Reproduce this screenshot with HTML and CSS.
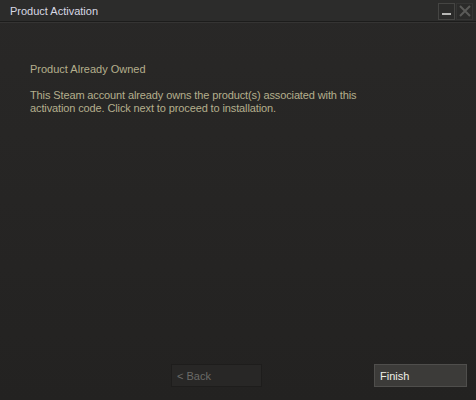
FILE: index.html
```html
<!DOCTYPE html>
<html>
<head>
<meta charset="utf-8">
<link rel="stylesheet" href="styles.css">
</head>
<body>
<div class="window">
  <div class="titlebar">
    <span class="title">Product Activation</span>
    <div class="controls">
      <div class="ctl min"><span class="dash"></span></div>
      <div class="ctl close">
        <svg width="14" height="14" viewBox="0 0 14 14"><path d="M2 2 L12 12 M12 2 L2 12" stroke="#5a5a58" stroke-width="2"/></svg>
      </div>
    </div>
  </div>
  <div class="content">
    <div class="heading">Product Already Owned</div>
    <p class="msg">This Steam account already owns the product(s) associated with this activation code. Click next to proceed to installation.</p>
  </div>
  <div class="footer">
    <button class="btn back">&lt; Back</button>
    <button class="btn finish">Finish</button>
  </div>
</div>
</body>
</html>
```
FILE: styles.css
```css
html, body { margin: 0; padding: 0; }
body { width: 476px; height: 400px; background: #262524; font-family: "Liberation Sans", Arial, sans-serif; font-size: 11px; }
.window { width: 476px; height: 400px; display: flex; flex-direction: column; background: linear-gradient(#292827, #232221); box-sizing: border-box; }
.titlebar { height: 21px; display: flex; align-items: center; justify-content: space-between; background: #2c2c2b; border-bottom: 1px solid #1c1c1b; box-shadow: 0 1px 0 #353433; }
.title { color: #d8d8e4; padding-left: 10px; font-size: 11px; }
.controls { display: flex; gap: 1px; padding-right: 3px; padding-top: 1px; }
.ctl { width: 15px; height: 15px; border: 1px solid #454543; display: flex; align-items: center; justify-content: center; background: #2b2b2a; }
.ctl.close { border-color: #353534; }
.dash { width: 9px; height: 2px; background: #b8b8b6; margin-top: 5px; }
.content { flex: 1; padding: 41px 30px 0 30px; color: #b5af8d; }
.heading { line-height: 13px; }
.msg { margin: 13px 0 0; line-height: 13px; width: 340px; letter-spacing: -0.12px; }
.footer { height: 36px; display: flex; align-items: flex-start; padding-left: 171px; }
.btn { font-family: inherit; font-size: 11px; height: 23px; text-align: left; padding: 0 5px; }
.back { width: 91px; background: #282726; border: 1px solid #1e1d1c; color: #6b6b68; }
.finish { width: 93px; margin-left: 112px; background: #3c3b39; border: 1px solid #4f4e4c; color: #efefe6; }
```
